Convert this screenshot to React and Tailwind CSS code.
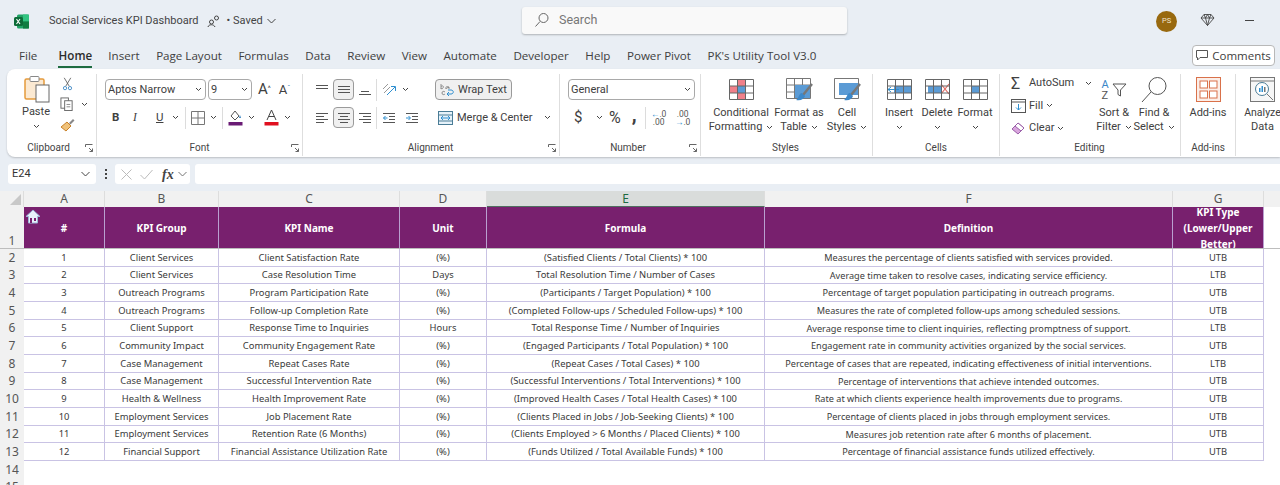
const rows = [
  ["1","Client Services","Client Satisfaction Rate","(%)","(Satisfied Clients / Total Clients) * 100","Measures the percentage of clients satisfied with services provided.","UTB"],
  ["2","Client Services","Case Resolution Time","Days","Total Resolution Time / Number of Cases","Average time taken to resolve cases, indicating service efficiency.","LTB"],
  ["3","Outreach Programs","Program Participation Rate","(%)","(Participants / Target Population) * 100","Percentage of target population participating in outreach programs.","UTB"],
  ["4","Outreach Programs","Follow-up Completion Rate","(%)","(Completed Follow-ups / Scheduled Follow-ups) * 100","Measures the rate of completed follow-ups among scheduled sessions.","UTB"],
  ["5","Client Support","Response Time to Inquiries","Hours","Total Response Time / Number of Inquiries","Average response time to client inquiries, reflecting promptness of support.","LTB"],
  ["6","Community Impact","Community Engagement Rate","(%)","(Engaged Participants / Total Population) * 100","Engagement rate in community activities organized by the social services.","UTB"],
  ["7","Case Management","Repeat Cases Rate","(%)","(Repeat Cases / Total Cases) * 100","Percentage of cases that are repeated, indicating effectiveness of initial interventions.","LTB"],
  ["8","Case Management","Successful Intervention Rate","(%)","(Successful Interventions / Total Interventions) * 100","Percentage of interventions that achieve intended outcomes.","UTB"],
  ["9","Health & Wellness","Health Improvement Rate","(%)","(Improved Health Cases / Total Health Cases) * 100","Rate at which clients experience health improvements due to programs.","UTB"],
  ["10","Employment Services","Job Placement Rate","(%)","(Clients Placed in Jobs / Job-Seeking Clients) * 100","Percentage of clients placed in jobs through employment services.","UTB"],
  ["11","Employment Services","Retention Rate (6 Months)","(%)","(Clients Employed > 6 Months / Placed Clients) * 100","Measures job retention rate after 6 months of placement.","UTB"],
  ["12","Financial Support","Financial Assistance Utilization Rate","(%)","(Funds Utilized / Total Available Funds) * 100","Percentage of financial assistance funds utilized effectively.","UTB"],
];
const widths = ["w-[81px]","w-[114px]","w-[181px]","w-[87px]","w-[278px]","w-[408px]","w-[91px]"];
const sizes = ["text-[9.4px]","text-[9.4px]","text-[9.4px]","text-[9.4px]","text-[9.4px]","text-[9.15px]","text-[9.4px]"];
const headers = ["#","KPI Group","KPI Name","Unit","Formula","Definition"];
const tabs = ["Insert","Page Layout","Formulas","Data","Review","View","Automate","Developer","Help","Power Pivot","PK's Utility Tool V3.0"];

const Chev = ({ className = "" }) => (
  <svg width="7" height="5" viewBox="0 0 7 5" className={"shrink-0 " + className}><path d="M1 1l2.500 2.500L6 1" fill="none" stroke="#444" strokeWidth="1" /></svg>
);
const Launcher = () => (
  <svg width="8" height="8" viewBox="0 0 8 8" className="shrink-0"><path d="M.5 3V.5H7.500M4 4l3.500 3.500M7.500 4.500v3h-3" fill="none" stroke="#666" strokeWidth="1" /></svg>
);
const Sep = ({ className = "" }) => <div className={"w-px h-[22px] bg-[#dcdcdc] shrink-0 " + className} />;
const Lines = ({ kind }) => {
  const sets = {
    top: [[1,2,12],[1,5,12]],
    mid: [[1,3,12],[1,6,12],[1,9,12]],
    bot: [[3,8,8],[1,11,12]],
    left: [[1,2,12],[1,5,8],[1,8,12],[1,11,8]],
    center: [[1,2,12],[3,5,8],[1,8,12],[3,11,8]],
    right: [[1,2,12],[5,5,8],[1,8,12],[5,11,8]],
  };
  return (
    <svg width="14" height="14" viewBox="0 0 14 14" className="shrink-0">
      {sets[kind].map(([x, y, w], i) => <rect key={i} x={x} y={y} width={w} height="1" fill="#555" />)}
    </svg>
  );
};
const Indent = ({ flip }) => (
  <svg width="14" height="14" viewBox="0 0 14 14" className="shrink-0">
    <rect x="1" y="2" width="12" height="1" fill="#555" /><rect x="7" y="5" width="6" height="1" fill="#555" /><rect x="7" y="8" width="6" height="1" fill="#555" /><rect x="1" y="11" width="12" height="1" fill="#555" />
    <path d={flip ? "M1 7h4M3.500 5l2 2-2 2" : "M5.500 7h-4M3.500 5l-2 2 2 2"} fill="none" stroke="#2f8fd0" strokeWidth="1" />
  </svg>
);
const Grid3 = ({ children }) => (
  <svg width="25" height="21" viewBox="0 0 25 21" className="shrink-0">
    {children}
    <path d="M.5.500h24v20H.5zM.5 7h24M.5 14h24M8.500.5v20M16.500.5v20" fill="none" stroke="#666" strokeWidth="1" />
  </svg>
);
const Brush = () => (
  <g><path d="M26 6L17 17" stroke="#777" strokeWidth="2.500" /><path d="M16 15c-3 0-3 5-6 7 5 1 8-1 9-4z" fill="#3d88c9" /></g>
);
const Big = ({ icon, l1, l2, chev, className = "" }) => (
  <div className={"flex flex-col items-center shrink-0 " + className}>
    <div className="h-[27px] flex items-center justify-center">{icon}</div>
    <div className="text-[11px] leading-[14px] mt-[3px] whitespace-nowrap">{l1}</div>
    <div className="text-[11px] leading-[14px] flex items-center gap-1 whitespace-nowrap min-h-[14px]">{l2}{chev && <Chev />}</div>
  </div>
);
const Group = ({ w, label, launcher, children }) => (
  <div className={"flex flex-col h-full border-r border-[#dedede] shrink-0 " + w}>
    <div className="flex-1 min-h-0 flex">{children}</div>
    <div className="h-[17px] flex items-center justify-center relative text-[10px] text-[#444]">
      {label}
      {launcher && <div className="absolute right-[3px] top-[5px]"><Launcher /></div>}
    </div>
  </div>
);
const Select = ({ text, className = "" }) => (
  <div className={"h-[21px] border border-[#a9a9a9] rounded-[4px] flex items-center justify-between pl-[2px] pr-[3px] text-[11px] bg-white shrink-0 " + className}>
    <span className="pt-[2px]">{text}</span><Chev />
  </div>
);

export default function App() {
  return (
    <div className="w-[1280px] h-[485px] overflow-hidden bg-[#e9eef4] text-[#333] relative font-['Roboto','Noto_Sans',sans-serif]">
      {/* Title bar */}
      <div className="h-[44px] flex items-center pl-[14px]">
        <svg width="15" height="15" viewBox="0 0 15 15" className="shrink-0 -mt-[2px]">
          <rect x="3" y="0.500" width="12" height="14" rx="1.500" fill="#21a366" />
          <rect x="9" y="0.500" width="6" height="7" fill="#33c481" />
          <rect x="9" y="7.500" width="6" height="7" fill="#107c41" />
          <rect x="0" y="3" width="9" height="9" rx="1.500" fill="#0d6b38" />
          <path d="M2.500 5l3.500 5M6 5l-3.500 5" stroke="#fff" strokeWidth="1.100" />
        </svg>
        <span className="ml-[20px] text-[11px] text-[#444] -mt-[2px] whitespace-nowrap">Social Services KPI Dashboard</span>
        <svg width="14" height="14" viewBox="0 0 14 14" className="ml-[8px] -mt-[3px] shrink-0"><circle cx="4.500" cy="8" r="2" fill="none" stroke="#444" /><path d="M1 13c.5-3 6-3 7 0" fill="none" stroke="#444" /><circle cx="9.500" cy="4" r="2" fill="none" stroke="#444" /></svg>
        <span className="ml-[6px] text-[11px] text-[#444] -mt-[2px] whitespace-nowrap">• Saved</span>
        <svg width="9" height="6" viewBox="0 0 9 6" className="ml-[4px] -mt-[2px]"><path d="M.5 1l4 4 4-4" fill="none" stroke="#444" /></svg>
        <div className="ml-auto -mt-[4px] w-[325px] h-[27px] bg-[#f9f9f9] rounded-[3px] shadow-[0_1px_2px_rgba(0,0,0,0.25)] flex items-center pl-[12px] text-[12.5px] text-[#777]">
          <svg width="16" height="16" viewBox="0 0 16 16" className="shrink-0"><circle cx="9.500" cy="6" r="4.500" fill="none" stroke="#666" /><path d="M6 9.500L1.500 14.500" stroke="#666" /></svg>
          <span className="ml-[9px]">Search</span>
        </div>
        <div className="ml-[309px] -mt-[2px] w-[21px] h-[21px] rounded-full bg-[#98690f] flex items-center justify-center text-[7.5px] text-[#f2e6cf]">PS</div>
        <svg width="15" height="14" viewBox="0 0 15 14" className="ml-[23px] -mt-[4px] shrink-0"><path d="M4 1.500h7l3 3.500-6.500 7.500L1 5zM1 5h13M5.500 5l2 7.500 2-7.500M4 1.500L5.500 5l2-3.500 2 3.500 1.500-3.500" fill="none" stroke="#444" strokeWidth=".9" /></svg>
        <div className="ml-[30px] mr-[26px] -mt-[4px] w-[9px] h-px bg-[#444] shrink-0" />
      </div>
      {/* Tabs */}
      <div className="h-[25px] flex items-start pl-[19px] text-[11.6px] text-[#404040] whitespace-nowrap relative font-['Open_Sans',sans-serif]">
        <span className="leading-[24px]">File</span>
        <div className="ml-[21px] flex flex-col items-center">
          <span className="leading-[24px] font-semibold text-[#2b2b2b]">Home</span>
          <div className="w-[34px] h-[2px] bg-[#1d6b41] -mt-[2px]" />
        </div>
        <div className="ml-[16px] flex gap-[16.500px] leading-[24px]">
          {tabs.map((t) => <span key={t}>{t}</span>)}
        </div>
        <div className="absolute left-[1192px] top-[1px] w-[83px] h-[21px] bg-white border border-[#b8b8b8] rounded-[4px] flex items-center justify-center gap-[4px] text-[11.5px]">
          <svg width="12" height="11" viewBox="0 0 12 11"><path d="M.5.500h11v7H4L1.500 10V7.500h-1z" fill="none" stroke="#555" /></svg>
          Comments
        </div>
      </div>
      {/* Ribbon */}
      <div className="ml-[7px] h-[88px] bg-white rounded-l-[8px] shadow-[0_1px_2px_rgba(0,0,0,0.2)] flex pt-[5px] pb-[1px] text-[#404040]">
        <Group w="w-[90px]" label={<span className="-ml-[6px]">Clipboard</span>} launcher>
          <div className="flex flex-col items-center w-[44px] ml-[7px]">
            <svg width="26" height="28" viewBox="0 0 26 28" className="shrink-0 mt-[1px] ml-[2px]">
              <rect x="1" y="4" width="19" height="20" rx="1.500" fill="#fbe9d2" stroke="#e59a3b" strokeWidth="1.500" />
              <rect x="6" y="1.500" width="9" height="5" rx="1" fill="#fff" stroke="#888" />
              <rect x="12" y="10" width="13" height="17" fill="#fff" stroke="#666" />
            </svg>
            <div className="text-[11px] leading-[14px] mt-[2px]">Paste</div>
            <Chev className="mt-[5px]" />
          </div>
          <div className="flex flex-col items-center w-[22px] gap-[6px] -ml-[2px]">
            <svg width="11" height="14" viewBox="0 0 12 17" className="mt-[3px]"><path d="M2 1l6 10M10 1L4 11" stroke="#555" /><circle cx="3" cy="13.500" r="2" fill="none" stroke="#2f7fc0" /><circle cx="9" cy="13.500" r="2" fill="none" stroke="#2f7fc0" /></svg>
            <div className="flex items-center gap-[7px] ml-[14px]">
              <svg width="14" height="14" viewBox="0 0 15 15" className="shrink-0"><rect x="1" y="1" width="8" height="11" fill="none" stroke="#666" /><rect x="5" y="4" width="8" height="10.500" fill="#fff" stroke="#666" /><path d="M7 8h4M7 10.500h4" stroke="#888" /></svg>
              <Chev />
            </div>
            <svg width="15" height="14" viewBox="0 0 15 14" className="mt-[1px]"><path d="M1 9l6-5 4 4-5 5z" fill="#f0c27a" stroke="#c9822a" /><path d="M9 5l4-4 1.500 1.500-4 4z" fill="#888" /></svg>
          </div>
        </Group>
        <Group w="w-[206px]" label="Font" launcher>
          <div className="flex flex-col pl-[8px] pt-[5px]">
            <div className="flex items-center">
              <Select text="Aptos Narrow" className="w-[101px]" />
              <Select text="9" className="w-[44px] ml-[2px]" />
              <span className="ml-[6px] text-[15px] leading-none">A<sup className="text-[7px]">^</sup></span>
              <span className="ml-[8px] text-[13px] leading-none">A<sup className="text-[7px] text-[#2f7fc0]">ˇ</sup></span>
            </div>
            <div className="flex items-center mt-[7px] h-[21px] pl-[7px]">
              <span className="w-[21px] text-[11.5px] font-bold">B</span>
              <span className="w-[23px] text-[11.5px] italic font-['Liberation_Serif',serif]">I</span>
              <span className="w-[16px] text-[11.5px] underline">U</span>
              <Chev />
              <Sep className="ml-[6px]" />
              <svg width="14" height="14" viewBox="0 0 14 14" className="ml-[5px] shrink-0"><path d="M.5.500h13v13H.5zM7 .5v13M.5 7h13" fill="none" stroke="#777" /></svg>
              <Chev className="ml-[5px]" />
              <Sep className="ml-[5px]" />
              <svg width="15" height="17" viewBox="0 0 15 17" className="ml-[5px] shrink-0"><path d="M3 7l4-5 4 5-4 4z" fill="none" stroke="#555" /><path d="M12 6l1 3h-2z" fill="#2f7fc0" /><rect x="0.500" y="13" width="14" height="3.500" fill="#6a1b75" /></svg>
              <Chev className="ml-[5px]" />
              <svg width="15" height="17" viewBox="0 0 15 17" className="ml-[9px] shrink-0"><path d="M3 11L7.500 1 12 11M5 7.500h5" fill="none" stroke="#444" /><rect x="0.500" y="13" width="14" height="3.500" fill="#e01020" /></svg>
              <Chev className="ml-[5px]" />
            </div>
          </div>
        </Group>
        <Group w="w-[257px]" label={<span className="-ml-[1px]">Alignment</span>} launcher>
          <div className="flex flex-col pl-[12px] pt-[5px]">
            <div className="flex items-center h-[21px]">
              <Lines kind="top" />
              <div className="ml-[4px] w-[21px] h-[21px] rounded-[4px] border border-[#9a9a9a] bg-[#f0f0f0] flex items-center justify-center"><Lines kind="mid" /></div>
              <div className="ml-[4px]"><Lines kind="bot" /></div>
              <Sep className="ml-[4px]" />
              <svg width="16" height="16" viewBox="0 0 16 16" className="ml-[4px] shrink-0"><path d="M2 7l5-5M3 11l6-6" stroke="#999" /><path d="M6 13L14 5M10 4.500h4.500V9" fill="none" stroke="#2f8fd0" /></svg>
              <Chev className="ml-[5px]" />
              <div className="ml-[26px] w-[77px] h-[21px] rounded-[4px] border border-[#9a9a9a] bg-[#f0f0f0] flex items-center justify-center gap-[3px] text-[11px]">
                <svg width="15" height="14" viewBox="0 0 15 14" className="shrink-0"><path d="M1 1v5M1 3.500c2-1.500 3 0 2 1.500s-2 .5-2 0M6 6c-1-2 1-3 3-2v2M9 4.500c-2 0-3 .5-2 1.500" fill="none" stroke="#777" strokeWidth=".8" /><path d="M5 9c-1-1-3-1-3 1s2 2 3 1" fill="none" stroke="#777" strokeWidth=".8" /><path d="M7 11h4c3 0 3-4 0-4H8M9 9l-2 2 2 2" fill="none" stroke="#2f8fd0" /></svg>
                <span className="pt-[2px]">Wrap Text</span>
              </div>
            </div>
            <div className="flex items-center h-[21px] mt-[7px]">
              <Lines kind="left" />
              <div className="ml-[4px] w-[21px] h-[21px] rounded-[4px] border border-[#9a9a9a] bg-[#f0f0f0] flex items-center justify-center"><Lines kind="center" /></div>
              <div className="ml-[4px]"><Lines kind="right" /></div>
              <Sep className="ml-[4px]" />
              <div className="ml-[5px]"><Indent /></div>
              <div className="ml-[9px]"><Indent flip /></div>
              <svg width="15" height="14" viewBox="0 0 15 14" className="ml-[19px] shrink-0"><rect x=".5" y=".5" width="14" height="13" fill="#e6f2fa" stroke="#4a7c96" /><path d="M.5 4h14M.5 10h14" stroke="#4a7c96" /><path d="M3 7h9M5 5l-2 2 2 2M10 5l2 2-2 2" fill="none" stroke="#2f8fd0" /></svg>
              <span className="ml-[4px] pt-[2px] text-[11px] whitespace-nowrap">Merge &amp; Center</span>
              <Chev className="ml-[11px]" />
            </div>
          </div>
        </Group>
        <Group w="w-[141px]" label={<span className="-ml-[4px]">Number</span>} launcher>
          <div className="flex flex-col pl-[8px] pt-[5px]">
            <Select text="General" className="w-[127px]" />
            <div className="flex items-center h-[21px] mt-[7px] pl-[6px]">
              <span className="text-[15px] w-[14px]">$</span>
              <Chev className="ml-[8px]" />
              <span className="ml-[6px] text-[16px] leading-none">%</span>
              <span className="ml-[11px] text-[20px] font-bold leading-none -mt-[7px]">,</span>
              <Sep className="ml-[8px]" />
              <span className="ml-[5px] text-[8.5px] leading-[8px] w-[16px] text-center text-[#555]"><span className="text-[#2f8fd0]">←</span>.0<br />.00</span>
              <span className="ml-[8px] text-[8.5px] leading-[8px] w-[16px] text-center text-[#555]">.00<br /><span className="text-[#2f8fd0]">→</span>.0</span>
            </div>
          </div>
        </Group>
        <Group w="w-[172px]" label={<span className="-ml-[2px]">Styles</span>}>
          <div className="flex pt-[2px] pl-[9px]">
            <Big className="w-[62px]" l1="Conditional" l2="Formatting" chev icon={<Grid3><rect x="8" y="1" width="9" height="6" fill="#f0808a" /><rect x="1" y="7" width="8" height="7" fill="#f0808a" /><rect x="9" y="7" width="8" height="7" fill="#5b9bd5" /><rect x="8" y="14" width="9" height="6" fill="#f0808a" /></Grid3>} />
            <Big className="w-[52px] ml-[1px]" l1="Format as" l2="Table" chev icon={<svg width="27" height="24" viewBox="0 0 27 24"><path d="M.5.500h24v20H.5zM.5 7h24M.5 14h24M8.500.5v20M16.500.5v20" fill="none" stroke="#777" /><rect x="9" y="7" width="15" height="13" fill="#5b9bd5" /><Brush /></svg>} />
            <Big className="w-[42px] ml-[1px]" l1="Cell" l2="Styles" chev icon={<svg width="27" height="24" viewBox="0 0 27 24"><path d="M.5.500h24v20H.5z" fill="none" stroke="#777" /><rect x="5" y="5" width="19" height="12" fill="#5b9bd5" /><Brush /></svg>} />
          </div>
        </Group>
        <Group w="w-[127px]" label="Cells">
          <div className="flex pt-[2px] pl-[7px]">
            <Big className="w-[38px]" l1="Insert" l2="" chev icon={<Grid3><rect x="7" y="7" width="18" height="7" fill="#5b9bd5" /><path d="M12 10.500H1M4 8l-3 2.500L4 13" fill="none" stroke="#2f8fd0" /></Grid3>} />
            <Big className="w-[38px]" l1="Delete" l2="" chev icon={<Grid3><rect x="3" y="7" width="13" height="7" fill="#5b9bd5" /><path d="M16 5l8 10M24 5l-8 10" stroke="#e0675f" strokeWidth="1.200" /></Grid3>} />
            <Big className="w-[38px]" l1="Format" l2="" chev icon={<Grid3><rect x="8" y="7" width="9" height="7" fill="#5b9bd5" /></Grid3>} />
          </div>
        </Group>
        <Group w="w-[181px]" label={<span className="-ml-[1px]">Editing</span>}>
          <div className="flex flex-col pl-[11px] pt-px text-[11px] w-[99px] shrink-0">
            <div className="flex items-center h-[22px] mt-[-2px]">
              <span className="text-[16px] leading-none w-[17px]">Σ</span>
              <span className="ml-[1px]">AutoSum</span>
              <Chev className="ml-[11px]" />
            </div>
            <div className="flex items-center h-[22px] mt-[1px]">
              <svg width="15" height="14" viewBox="0 0 15 14" className="shrink-0"><rect x=".5" y=".5" width="14" height="13" fill="none" stroke="#555" /><path d="M.5 3h14" stroke="#555" /><path d="M7.500 5v6M5 8.500l2.500 2.500L10 8.500" fill="none" stroke="#2f8fd0" /></svg>
              <span className="ml-[3px]">Fill</span>
              <Chev className="ml-[3px]" />
            </div>
            <div className="flex items-center h-[22px] mt-[1px]">
              <svg width="15" height="14" viewBox="0 0 15 14" className="shrink-0"><path d="M1 8l6-6 6 5-6 6z" fill="#d9a6de" stroke="#9a5ea8" /><path d="M7 2l6 5-3 3-6-5z" fill="#fff" stroke="#9a5ea8" /></svg>
              <span className="ml-[3px]">Clear</span>
              <Chev className="ml-[3px]" />
            </div>
          </div>
          <div className="flex pt-[2px]">
            <Big className="w-[40px] -ml-[5px]" l1="Sort &amp;" l2="Filter" chev icon={<div className="flex items-center"><div className="flex flex-col text-[11px] leading-[11px] w-[10px]"><span className="text-[#3a86c8]">A</span><span className="text-[#555]">Z</span></div><svg width="15" height="15" viewBox="0 0 15 15"><path d="M1 2h13L8.500 8v6l-2.500-1.500V8z" fill="none" stroke="#555" /></svg></div>} />
            <Big className="w-[40px]" l1="Find &amp;" l2="Select" chev icon={<svg width="27" height="27" viewBox="0 0 27 27"><circle cx="16.500" cy="10" r="8.500" fill="none" stroke="#555" /><path d="M10 16L1 26" stroke="#555" /></svg>} />
          </div>
        </Group>
        <Group w="w-[55px]" label="Add-ins">
          <div className="flex justify-center w-full pt-[2px]">
            <Big l1="Add-ins" l2="" icon={<svg width="25" height="25" viewBox="0 0 25 25"><rect x=".5" y=".5" width="24" height="24" fill="#fbeee8" stroke="#d9714a" /><rect x="4" y="4" width="7.500" height="7" fill="#fff" stroke="#d9714a" /><rect x="13.500" y="4" width="7.500" height="7" fill="#fff" stroke="#d9714a" /><rect x="4" y="14" width="7.500" height="7" fill="#fff" stroke="#d9714a" /><rect x="13.500" y="14" width="7.500" height="7" fill="#fff" stroke="#d9714a" /></svg>} />
          </div>
        </Group>
        <div className="pl-[9px] pt-[2px] shrink-0 w-[44px]">
          <Big className="w-[35px]" l1={<span className="text-[10.5px]">Analyze</span>} l2="Data" icon={<svg width="25" height="25" viewBox="0 0 25 25"><rect x=".5" y=".5" width="24" height="24" fill="#f6f6f6" stroke="#777" /><path d="M.5 4h24" stroke="#777" /><circle cx="12" cy="12" r="6.500" fill="#fff" stroke="#4a7c96" /><rect x="9" y="11" width="1.500" height="4" fill="#2f8fd0" /><rect x="11.500" y="9" width="1.500" height="6" fill="#2f8fd0" /><rect x="14" y="10" width="1.500" height="5" fill="#777" /><path d="M17 17l6 6" stroke="#777" /></svg>} />
        </div>
      </div>
      {/* Formula bar */}
      <div className="h-[34px] flex items-start pt-[7px] pl-[8px]">
        <div className="w-[88px] h-[20px] bg-white rounded-[3px] flex items-center justify-between pl-[4px] pr-[6px] text-[11px]">
          <span>E24</span>
          <svg width="9" height="6" viewBox="0 0 9 6"><path d="M.5 1l4 4 4-4" fill="none" stroke="#444" /></svg>
        </div>
        <div className="ml-[9px] w-[2px] h-[10px] mt-[5px] border-y-[2px] border-[#444] relative"><div className="h-[2px] mt-[2px] bg-[#444]" /></div>
        <div className="ml-[8px] w-[75px] h-[20px] bg-white rounded-[3px] flex items-center pl-[6px]">
          <svg width="11" height="11" viewBox="0 0 11 11"><path d="M.5.500l10 10M10.500.5l-10 10" stroke="#bbb" /></svg>
          <svg width="13" height="11" viewBox="0 0 13 11" className="ml-[8px]"><path d="M.5 6l4 4 8-9" fill="none" stroke="#bbb" /></svg>
          <span className="ml-[9px] font-['Liberation_Serif',serif] italic font-bold text-[14px] text-[#444]">fx</span>
          <svg width="9" height="6" viewBox="0 0 9 6" className="ml-[4px]"><path d="M.5 1l4 4 4-4" fill="none" stroke="#777" /></svg>
        </div>
        <div className="ml-[5px] flex-1 h-[20px] bg-white rounded-l-[3px]" />
      </div>
      {/* Sheet */}
      <div className="bg-white h-[294px] font-['Noto_Sans',sans-serif]">
        <div className="h-[16px] flex bg-[#f1f1f1] text-[12px] text-[#555] relative">
          <div className="w-[24px] flex items-end justify-end pr-[2px] pb-[2px] border-r border-[#ddd]">
            <div className="w-0 h-0 border-l-[11px] border-l-transparent border-b-[11px] border-b-[#c8c8c8]" />
          </div>
          {["A","B","C","D","E","F","G"].map((c, i) => (
            <div key={c} className={"flex items-center justify-center border-r border-[#ddd] " + widths[i] + (c === "E" ? " bg-[#d9dcdb] border-b border-b-[#4f6f60] text-[#1d6b41]" : "")}>{c}</div>
          ))}
        </div>
        <div className="h-[42px] flex border-b border-[#bdbdbd] relative">
          <div className="w-[24px] bg-[#f1f1f1] flex items-end justify-center text-[12px] text-[#555] leading-[15px]">1</div>
          {headers.map((h, i) => (
            <div key={h} className={"bg-[#78206e] border-r border-[#b9a0d0] text-white font-bold text-[10px] pt-px flex items-center justify-center " + widths[i]}>{h}</div>
          ))}
          <div className={"bg-[#78206e] border-r border-[#b9a0d0] text-white font-bold text-[10px] leading-[16px] flex flex-col items-center justify-center overflow-hidden text-center " + widths[6]}>
            <span className="shrink-0">KPI Type</span><span className="shrink-0">(Lower/Upper</span><span className="shrink-0">Better)</span>
          </div>
          <svg width="16" height="15" viewBox="0 0 16 15" className="absolute left-[25px] top-[2px]"><path d="M8 1L1 7.500h2.500V14h9V7.500H15z" fill="#e8f1fb" stroke="#9db6d8" /><rect x="5" y="9" width="2" height="5" fill="#78206e" /><rect x="9" y="9" width="2" height="3" fill="#78206e" /></svg>
        </div>
        {rows.map((r, idx) => (
          <div key={idx} className="h-[17.67px] flex">
            <div className="w-[24px] bg-[#f1f1f1] flex items-center justify-center text-[12px] text-[#555] shrink-0">{idx + 2}</div>
            {r.map((v, i) => (
              <div key={i} className={"border-r border-b border-[#c9c3e4] pt-px flex items-center justify-center text-[#3a3a3a] whitespace-nowrap " + widths[i] + " " + sizes[i]}>{v}</div>
            ))}
          </div>
        ))}
        <div className="h-[17.67px] w-[24px] bg-[#f1f1f1] flex items-center justify-center text-[12px] text-[#555]">14</div>
        <div className="h-[17.67px] w-[24px] bg-[#f1f1f1] flex items-center justify-center text-[12px] text-[#555]">15</div>
      </div>
    </div>
  );
}
